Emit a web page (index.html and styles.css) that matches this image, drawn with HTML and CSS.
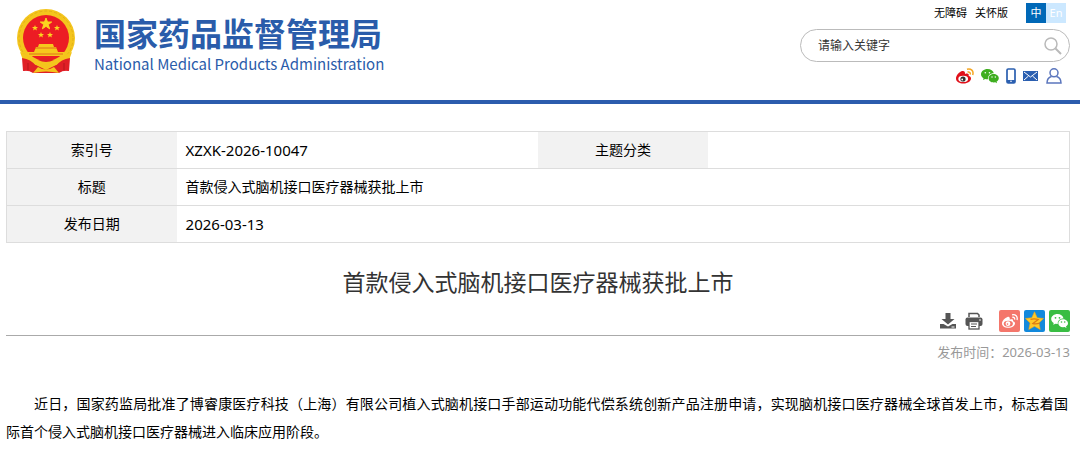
FILE: index.html
```html
<!DOCTYPE html>
<html lang="zh-CN">
<head>
    <meta charset="UTF-8">
    <meta name="viewport" content="width=device-width, initial-scale=1.0">
    <title>首款侵入式脑机接口医疗器械获批上市</title>
    <link rel="stylesheet" href="styles.css">
</head>
<body>
    <header class="header">
        <a class="logo" href="#">
            <svg class="emblem" viewBox="0 0 60 65" aria-hidden="true">
                <path d="M10 49 L7 62 Q13 61 17 64 H43 Q47 61 53 62 L50 49Z" fill="#e01f26"/>
                <circle cx="30" cy="29" r="29" fill="#f4c51d"/>
                <circle cx="30" cy="29" r="27" fill="none" stroke="#e3b018" stroke-dasharray="3 2"/>
                <circle cx="30" cy="29" r="23" fill="#ec1c24"/>
                <path d="M30 9 l1.500 4 h4.200 l-3.400 2.600 1.300 4.200 -3.600 -2.500 -3.600 2.500 1.300 -4.200 -3.400 -2.600 h4.200z" fill="#fbd51f" stroke="#fbd51f"/>
                <g fill="#fbd51f">
                    <path id="star" d="M19 16 l.8 2 h2.200 l-1.700 1.400 .6 2.200 -1.900 -1.300 -1.900 1.300 .6 -2.200 -1.700 -1.400 h2.200z"/>
                    <use href="#star" x="22"/>
                    <use href="#star" x="6" y="7"/>
                    <use href="#star" x="15" y="7"/>
                </g>
                <path d="M23 35 h14 l1 3 h-16z M20 38 h20 l2 5 h-24z M12 43 h36 v4 h-36z" fill="#f6c81c"/>
                <path d="M19 39 h22 M13 45 h34" stroke="#dc5a1c" stroke-width=".8"/>
                <path d="M4 43 Q14 47 22 54 L30 49 L38 54 Q46 47 56 43 L52 54 Q44 51 38 57 L30 61 L22 57 Q16 51 8 54Z" fill="#f4c51d"/>
                <path d="M22 51 Q30 46 38 51 Q30 55 22 51Z" fill="#e01f26"/>
                <path d="M6 49 Q15 50 20 57 L16 63 Q12 60 7 62Z M54 49 Q45 50 40 57 L44 63 Q48 60 53 62Z" fill="#e01f26"/>
                <path d="M17 64 L22 58 Q30 63 38 58 L43 64 Q30 61 17 64Z" fill="#f4c51d"/>
                <path d="M12 54 v7 M48 54 v7" stroke="#b5161c"/>
            </svg>
            <span class="logo-text">
                <span class="logo-cn">国家药品监督管理局</span>
                <span class="logo-en">National Medical Products Administration</span>
            </span>
        </a>

        <div class="tools">
            <div class="top-links">
                <a href="#">无障碍</a>
                <a href="#">关怀版</a>
                <div class="lang">
                    <a class="lang-item active" href="#">中</a>
                    <a class="lang-item" href="#">En</a>
                </div>
            </div>
            <form class="search">
                <input class="search-input" type="text" placeholder="请输入关键字" aria-label="请输入关键字">
                <button class="search-button" type="button" aria-label="搜索">
                    <svg width="18" height="18" viewBox="0 0 18 18" fill="none" stroke="#b9b9b9">
                        <circle cx="7" cy="7" r="6" stroke-width="1.500"/>
                        <path d="M11.500 11.500 L17 17" stroke-width="2"/>
                    </svg>
                </button>
            </form>
            <nav class="social">
                <a href="#" aria-label="微博">
                    <svg width="18" height="16" viewBox="0 0 18 16">
                        <path d="M6 3 C3 4 0 7.500 0 10.500 C0 14 3.500 15.500 7.500 15.500 C12 15.500 15 13 15 10.500 C15 9 14 8.300 12.700 8 C13.200 5.500 11.500 5 9 6 C9.300 3.500 8 2.500 6 3Z" fill="#e0101a"/>
                        <ellipse cx="7.200" cy="10.900" rx="4.900" ry="3.100" fill="#fff"/>
                        <circle cx="7" cy="11" r="2.600" fill="#333"/>
                        <circle cx="6.200" cy="11.500" r=".9" fill="#fff"/>
                        <path d="M11 1.200 C15 0 18 3 16.700 7 M11.500 4 C13.500 3.500 14.700 4.800 14.200 6.500" fill="none" stroke="#f5a623" stroke-width="1.500"/>
                    </svg>
                </a>
                <a href="#" aria-label="微信">
                    <svg width="18" height="16" viewBox="0 0 18 16">
                        <path d="M6.500 1 C3 1 0 3.300 0 6.200 C0 8 1 9.300 2.500 10.200 L2 12 L4.200 11 Q5.500 11.400 7 11.300 C6.500 8 9 5.300 12.800 5.300 C12.300 2.800 9.800 1 6.500 1Z" fill="#3fae20"/>
                        <path d="M12.600 6 C9.800 6 7.600 7.900 7.600 10.200 C7.600 12.600 9.800 14.400 12.600 14.400 L14.300 14.200 L16 15.200 L15.600 13.500 C17 12.700 17.800 11.500 17.800 10.200 C17.800 7.900 15.400 6 12.600 6Z" fill="#3fae20"/>
                        <g fill="#fff"><circle cx="4.300" cy="4.700" r=".8"/><circle cx="8.500" cy="4.700" r=".8"/><circle cx="11" cy="9" r=".7"/><circle cx="14.300" cy="9" r=".7"/></g>
                    </svg>
                </a>
                <a href="#" aria-label="手机">
                    <svg width="10" height="16" viewBox="0 0 10 16">
                        <rect x="1" y="1" width="8" height="14" rx="1.200" fill="#fff" stroke="#2b5fb0" stroke-width="1.700"/>
                        <path d="M1 12 h8 v3 h-8z" fill="#2b5fb0"/>
                        <circle cx="5" cy="13.200" r=".8" fill="#fff"/>
                    </svg>
                </a>
                <a href="#" aria-label="邮箱">
                    <svg width="16" height="16" viewBox="0 0 16 16">
                        <rect x="0" y="3" width="15" height="10" fill="#2b5fb0"/>
                        <path d="M1 4 L7.500 9 L14 4 M1 12 L5.500 8 M14 12 L9.500 8" fill="none" stroke="#fff"/>
                    </svg>
                </a>
                <a href="#" aria-label="个人中心">
                    <svg width="16" height="16" viewBox="0 0 16 16" fill="none" stroke="#5b76bd" stroke-width="1.500">
                        <circle cx="8" cy="4.800" r="4"/>
                        <path d="M5.500 8.500 C2.800 9.300 1 11.500 1 15 H15 C15 11.500 13.200 9.300 10.500 8.500"/>
                    </svg>
                </a>
            </nav>
        </div>
    </header>

    <main class="content">
        <table class="info">
            <tr>
                <th>索引号</th>
                <td class="code">XZXK-2026-10047</td>
                <th>主题分类</th>
                <td></td>
            </tr>
            <tr>
                <th>标题</th>
                <td colspan="3">首款侵入式脑机接口医疗器械获批上市</td>
            </tr>
            <tr>
                <th>发布日期</th>
                <td class="code" colspan="3">2026-03-13</td>
            </tr>
        </table>

        <h1 class="title">首款侵入式脑机接口医疗器械获批上市</h1>

        <div class="share">
            <button class="icon-button" type="button" aria-label="下载">
                <svg width="18" height="18" viewBox="0 0 18 18" fill="#555">
                    <path d="M6.500 1 h5 v6 h4 L9 12.500 L2.500 7 h4z"/>
                    <path d="M1 12 h3.500 l4.500 2.500 4.500 -2.500 h3.500 v4.500 h-16z"/>
                    <path d="M12.500 15 h3" stroke="#fff"/>
                </svg>
            </button>
            <button class="icon-button print" type="button" aria-label="打印">
                <svg width="18" height="18" viewBox="0 0 18 18">
                    <path d="M4 5 V1.500 h8.500 L14 3 V5" fill="#fff" stroke="#555" stroke-width="1.500"/>
                    <rect x=".5" y="5.500" width="17" height="8.500" rx="2" fill="#555"/>
                    <rect x="4" y="9.500" width="10" height="7.500" fill="#fff" stroke="#555" stroke-width="1.300"/>
                    <path d="M6 12 h6 M6 14.500 h5" stroke="#555"/>
                    <circle cx="15" cy="8" r=".8" fill="#fff"/>
                </svg>
            </button>
            <a class="share-link" href="#" aria-label="分享到微博">
                <svg width="21" height="22" viewBox="0 0 21 22">
                    <rect width="21" height="22" rx="2" fill="#f4766b"/>
                    <path d="M8.500 7 C6 7.800 3 11 3 13.500 C3 16.300 6 17.800 9.300 17.800 C13.200 17.800 16 15.700 16 13.500 C16 12 15 11.500 14 11.200 C14.500 9.300 13 9 10.800 9.700 C11 7.500 10.200 6.500 8.500 7Z" fill="#fff"/>
                    <ellipse cx="9.300" cy="13.700" rx="4.600" ry="3" fill="#f4766b"/>
                    <circle cx="9" cy="13.700" r="2.400" fill="#fff"/>
                    <circle cx="8.500" cy="14.100" r=".8" fill="#f4766b"/>
                    <path d="M13 4.800 C16.500 4 19 6.500 18 10 M13.300 7.300 C15 7 16 8 15.600 9.600" fill="none" stroke="#fff" stroke-width="1.300"/>
                </svg>
            </a>
            <a class="share-link" href="#" aria-label="分享到QQ空间">
                <svg width="21" height="22" viewBox="0 0 21 22">
                    <rect width="21" height="22" rx="2" fill="#1289dc"/>
                    <path d="M10.500 1.800 L13.200 7.800 L19.500 8.500 L14.900 13 L16.200 19.500 L10.500 16.300 L4.800 19.500 L6.100 13 L1.500 8.500 L7.800 7.800Z" fill="#ffc928" stroke="#f3a916" stroke-width=".6"/>
                    <path d="M6.500 9.300 Q10.500 8.300 14.200 9.500 L9 13.500 Q12 14.300 16 13" fill="none" stroke="#dd7c12" stroke-width="1.300"/>
                </svg>
            </a>
            <a class="share-link" href="#" aria-label="分享到微信">
                <svg width="21" height="22" viewBox="0 0 21 22">
                    <rect width="21" height="22" rx="2" fill="#39bd43"/>
                    <path d="M8.500 4 C5 4 2.200 6.200 2.200 9 C2.200 10.700 3.200 12 4.700 12.900 L4.200 14.800 L6.500 13.700 L8.800 13.900 C8.300 10.700 11 8.300 14.500 8.400 C14 5.800 11.500 4 8.500 4Z" fill="#fff"/>
                    <path d="M14 9.200 C11.300 9.200 9.300 11 9.300 13.200 C9.300 15.500 11.300 17.200 14 17.200 L15.600 17 L17.500 18 L17 16.300 C18.300 15.500 19 14.500 19 13.200 C19 11 16.700 9.200 14 9.200Z" fill="#fff"/>
                    <g fill="#39bd43"><circle cx="6.500" cy="7.800" r=".9"/><circle cx="10.500" cy="7.800" r=".9"/><circle cx="12.500" cy="12" r=".8"/><circle cx="15.700" cy="12" r=".8"/></g>
                </svg>
            </a>
        </div>

        <p class="date">发布时间：2026-03-13</p>

        <p class="article">近日，国家药监局批准了博睿康医疗科技（上海）有限公司植入式脑机接口手部运动功能代偿系统创新产品注册申请，实现脑机接口医疗器械全球首发上市，标志着国际首个侵入式脑机接口医疗器械进入临床应用阶段。</p>
    </main>
</body>
</html>
```

FILE: styles.css
```css
* {
    box-sizing: border-box;
}

body {
    margin: 0;
    color: #000;
    background-color: #fff;
    font-family: "Noto Sans", "Noto Sans CJK SC", sans-serif;
    font-size: 14px;
}

a {
    color: inherit;
    text-decoration: none;
}

svg {
    display: block;
}

/* Шапка */
.header {
    display: flex;
    justify-content: space-between;
    height: 104px;
    padding: 0 10px 0 16px;
    border-bottom: 4px solid #2c5cad;
}

.logo {
    display: flex;
    align-items: flex-start;
    gap: 18px;
    padding-top: 9px;
    color: #2a5caa;
}

.emblem {
    width: 60px;
    height: 65px;
}

.logo-text {
    display: flex;
    flex-direction: column;
    padding-top: 5px;
}

.logo-cn {
    font-size: 32px;
    line-height: 40px;
    font-weight: bold;
}

.logo-en {
    font-family: "Noto Sans CJK SC", sans-serif;
    font-size: 15px;
    line-height: 20px;
}

.tools {
    width: 270px;
}

.top-links {
    display: flex;
    justify-content: flex-end;
    gap: 8px;
    padding: 3px 4px 0 0;
    font-size: 11px;
    line-height: 20px;
}

.lang {
    display: flex;
    margin-left: 10px;
}

.lang-item {
    width: 20px;
    color: #fff;
    background-color: #cce8ff;
    text-align: center;
}

.lang-item.active {
    background-color: #0068b7;
}

.search {
    display: flex;
    align-items: center;
    height: 33px;
    margin-top: 6px;
    padding: 0 7px 0 17px;
    border: 1px solid #bbb;
    border-radius: 17px;
}

.search-input {
    flex: 1;
    min-width: 0;
    padding: 0;
    border: none;
    outline: none;
    background: none;
    font-family: inherit;
    font-size: 12px;
}

.search-input::placeholder {
    color: #333;
}

.search-button,
.icon-button {
    padding: 0;
    border: none;
    background: none;
}

.social {
    display: flex;
    justify-content: flex-end;
    gap: 7px;
    padding: 6px 8px 0 0;
}

/* Таблица */
.content {
    padding: 27px 10px 0 6px;
}

.info {
    width: 100%;
    border: 1px solid #ddd;
    border-collapse: collapse;
    table-layout: fixed;
}

.info tr {
    border-bottom: 1px solid #ddd;
}

.info th,
.info td {
    height: 37px;
    padding: 0 9px;
    line-height: 20px;
}

.info th {
    width: 16%;
    background-color: #f2f2f2;
    font-weight: normal;
}

.info .code {
    font-size: 15px;
}

/* Статья */
.title {
    margin: 22px 0 0;
    color: #333;
    font-size: 23px;
    line-height: 34px;
    font-weight: normal;
    text-align: center;
}

.share {
    display: flex;
    align-items: center;
    justify-content: flex-end;
    gap: 4px;
    margin-top: 11px;
    padding-bottom: 3px;
    border-bottom: 1px solid #aaa;
}

.print {
    margin: 0 12px 0 4px;
}

.date {
    margin: 6px 0 0;
    color: #999;
    font-size: 13px;
    line-height: 20px;
    text-align: right;
}

.article {
    margin: 28px 0 0;
    padding-right: 2px;
    line-height: 28px;
    text-align: justify;
    text-indent: 2em;
}
```
